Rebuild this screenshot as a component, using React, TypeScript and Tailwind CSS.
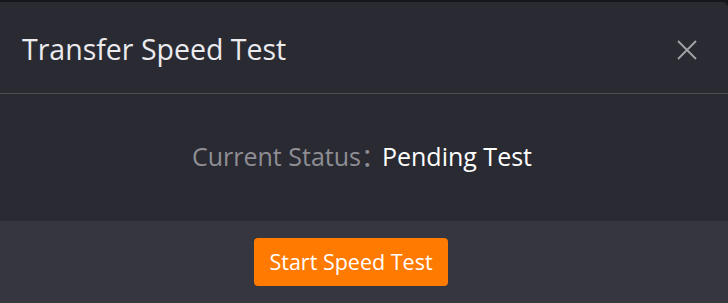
export default function App() {
  return (
    <div className="h-[303px] w-[728px] bg-[#16171c] pt-[2px] font-['Open_Sans','Noto_Sans_CJK_SC',sans-serif]">
      <div className="flex h-[301px] flex-col overflow-hidden rounded-tr-[6px] bg-[#2a2a33]">
        <div className="flex h-[92px] items-center justify-between border-b border-[#4b4b52] pl-[22px] pr-[31px]">
          <h2 className="pt-[4px] text-[28.5px] leading-none text-[#ebebee]">Transfer Speed Test</h2>
          <button type="button" className="mt-[4px] text-[#a3a3a8]">
            <svg width="20" height="20" viewBox="0 0 20 20" fill="none" stroke="currentColor" strokeWidth="1.8">
              <path d="M1 1L19 19M19 1L1 19" />
            </svg>
          </button>
        </div>
        <div className="flex h-[127px] items-center justify-center pb-[2px] pr-[4px] text-[25px]">
          <span className="text-[#8e8e94]">Current Status：</span>
          <span className="-ml-[4px] text-white">Pending Test</span>
        </div>
        <div className="flex flex-1 items-start justify-center bg-[#363640] pr-[26px] pt-[17px]">
          <button
            type="button"
            className="h-[48px] w-[194px] rounded-[4px] bg-[#ff7a00] text-[21.5px] text-white"
          >
            Start Speed Test
          </button>
        </div>
      </div>
    </div>
  );
}
